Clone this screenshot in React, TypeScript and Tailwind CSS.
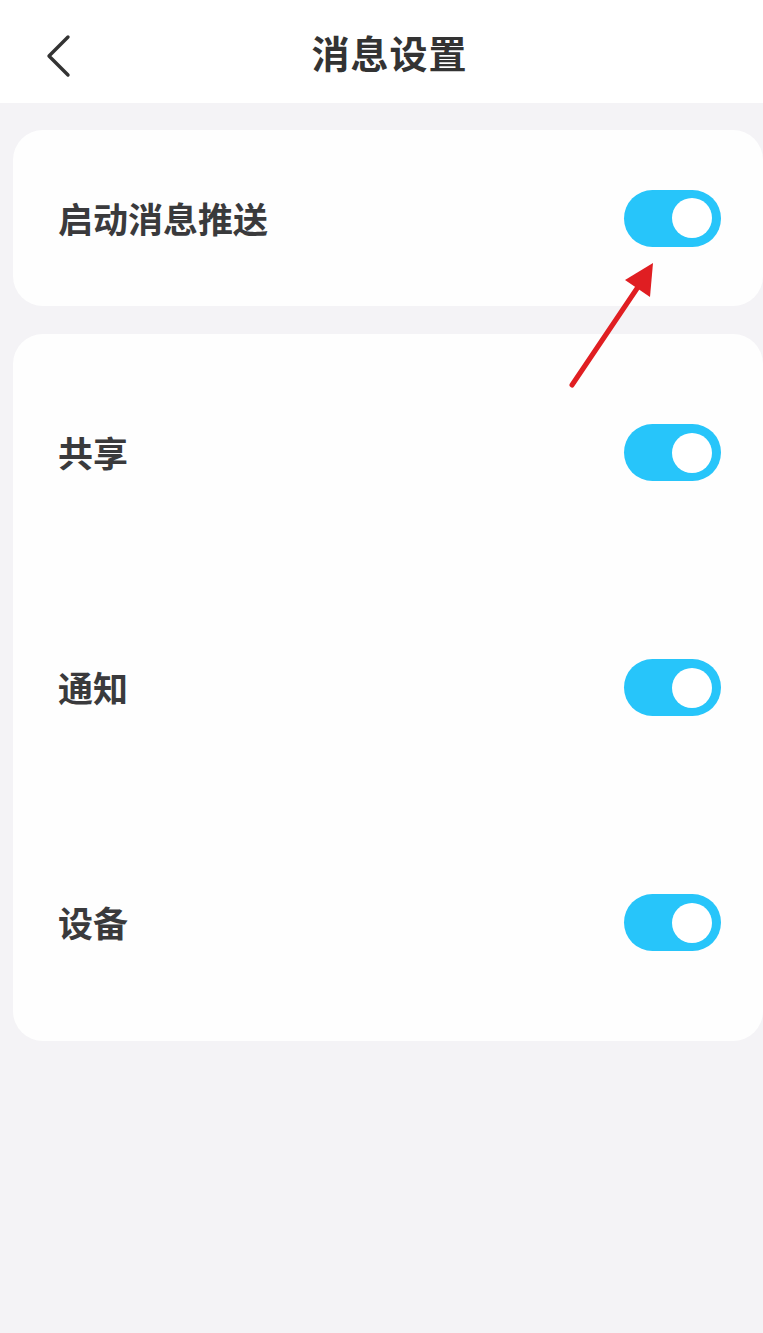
import { useState } from 'react';

type Item = { key: string; label: string };

const groups: Item[] = [
  { key: 'share', label: '共享' },
  { key: 'notice', label: '通知' },
  { key: 'device', label: '设备' },
];

function Toggle({ on, onChange }: { on: boolean; onChange: () => void }) {
  return (
    <button
      onClick={onChange}
      className={`relative flex h-[57px] w-[97px] items-center rounded-full px-[9px] ${
        on ? 'justify-end bg-[#27c5fa]' : 'justify-start bg-[#d9d9de]'
      }`}
    >
      <span className="block h-[40px] w-[40px] rounded-full bg-white" />
    </button>
  );
}

export default function App() {
  const [push, setPush] = useState(true);
  const [flags, setFlags] = useState<Record<string, boolean>>({
    share: true,
    notice: true,
    device: true,
  });

  return (
    <div
      className="relative min-h-[1333px] w-[763px] bg-[#f4f3f6] text-[#3a3a3c]"
      style={{ fontFamily: '"Noto Sans CJK SC", "Noto Sans", sans-serif' }}
    >
      <header className="relative flex h-[103px] items-center justify-center bg-white">
        <button className="absolute left-[44px] top-[34px] p-0">
          <svg width="30" height="44" viewBox="0 0 30 44" fill="none">
            <path d="M24 3 L5 22 L24 41" stroke="#333" strokeWidth="3.4" strokeLinecap="round" strokeLinejoin="round" />
          </svg>
        </button>
        <h1 className="ml-[16px] text-[38px] font-bold leading-none tracking-[1px] text-[#333]">消息设置</h1>
      </header>

      <div className="flex flex-col gap-[28px] pl-[13px] pt-[27px]">
        <section className="flex h-[176px] items-center justify-between rounded-l-[30px] rounded-r-[30px] bg-[#fefefe] pl-[45px] pr-[42px]">
          <span className="text-[35px] font-bold">启动消息推送</span>
          <Toggle on={push} onChange={() => setPush(!push)} />
        </section>

        <section className="flex flex-col rounded-[30px] bg-[#fefefe] py-[1px]">
          {groups.map((g) => (
            <div key={g.key} className="flex h-[235px] items-center justify-between pl-[45px] pr-[42px]">
              <span className="text-[35px] font-bold">{g.label}</span>
              <Toggle on={flags[g.key]} onChange={() => setFlags({ ...flags, [g.key]: !flags[g.key] })} />
            </div>
          ))}
        </section>
      </div>

      {/* red pointer arrow over the first switch */}
      <svg className="pointer-events-none absolute left-0 top-0" width="763" height="420" viewBox="0 0 763 420">
        <line x1="572" y1="385" x2="640" y2="284" stroke="#e01e22" strokeWidth="5" strokeLinecap="round" />
        <polygon points="653,263 625,280 650,297" fill="#e01e22" />
      </svg>
    </div>
  );
}
